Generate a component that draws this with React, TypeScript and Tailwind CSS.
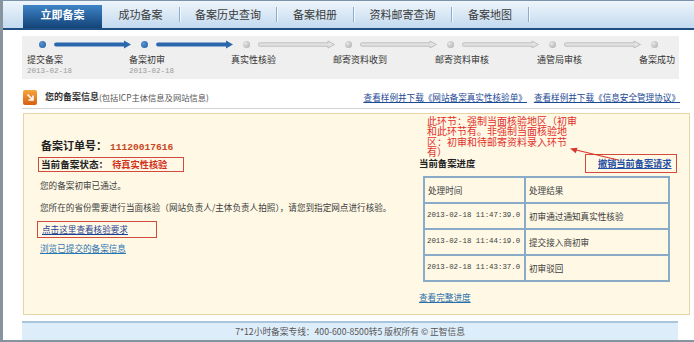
import React from "react";

const cjk = "font-['Noto_Sans_CJK_SC','Noto_Sans',sans-serif]";
const mono = "font-['Liberation_Mono',monospace]";

const tabs = [
  { name: "成功备案", w: "w-[78px]" },
  { name: "备案历史查询", w: "w-[97px]" },
  { name: "备案相册", w: "w-[77px]" },
  { name: "资料邮寄查询", w: "w-[98px]" },
  { name: "备案地图", w: "w-[77px]" },
];

const steps = [
  { label: "提交备案", date: "2013-02-18", done: true },
  { label: "备案初审", date: "2013-02-18", done: true },
  { label: "真实性核验", date: "", done: false },
  { label: "邮寄资料收到", date: "", done: false },
  { label: "邮寄资料审核", date: "", done: false },
  { label: "通管局审核", date: "", done: false },
  { label: "备案成功", date: "", done: false },
];

const records = [
  { time: "2013-02-18 11:47:39.0", result: "初审通过通知真实性核验" },
  { time: "2013-02-18 11:44:19.0", result: "提交接入商初审" },
  { time: "2013-02-18 11:43:37.0", result: "初审驳回" },
];

const Arrow = ({ done }: { done: boolean }) => (
  <svg width="78" height="9" viewBox="0 0 78 9" className="ml-[8px] shrink-0">
    {done ? (
      <path d="M2 2.6 H70 V0.6 L77 4.5 L70 8.4 V6.4 H2 A1.9 1.9 0 0 1 2 2.6 Z" fill="#2b67ad" />
    ) : (
      <path
        d="M2 2.8 H70 V1 L76.5 4.5 L70 8 V6.2 H2 A1.7 1.7 0 0 1 2 2.8 Z"
        fill="#e2e2e2"
        stroke="#b4b4b4"
        strokeWidth="0.8"
      />
    )}
  </svg>
);

const StepBar = () => (
  <div className="ml-[19px] mt-[6px] w-[657px] h-[43px] bg-[#efefef] pl-[5px] pt-[4px] flex">
    {steps.map((s, i) => (
      <div key={s.label} className="w-[102px] shrink-0 flex flex-col">
        <div className="flex items-center h-[9px]">
          <span
            className={`ml-[12px] w-[7px] h-[7px] rounded-full shrink-0 ${
              s.done
                ? "bg-[radial-gradient(circle_at_35%_35%,#5c93d1,#1f5ca3)]"
                : "bg-[radial-gradient(circle_at_35%_35%,#e6e6e6,#a8a8a8)]"
            }`}
          ></span>
          {i < steps.length - 1 && <Arrow done={s.done} />}
        </div>
        <div className="mt-[5px] text-[9px] leading-[11px] text-[#333] whitespace-nowrap">{s.label}</div>
        <div className={`${mono} mt-[2px] text-[7.5px] leading-[9px] text-[#9a9a9a]`}>{s.date}</div>
      </div>
    ))}
  </div>
);

export default function App() {
  return (
    <div
      className={`${cjk} relative w-[694px] h-[342px] bg-white border-l-[3px] border-b-2 border-[#8694a0] overflow-hidden`}
    >
      {/* Tabs */}
      <div className="h-[30px] border-t border-[#7b93aa] border-b-2 border-b-[#1f4f82] bg-gradient-to-b from-[#eef5fb] to-[#c3daef] flex items-end pl-[20px]">
        <div className="w-[79px] h-[23px] bg-gradient-to-b from-[#3f84c7] to-[#134479] text-white font-bold text-[11px] flex items-center justify-center pb-[4px]">
          立即备案
        </div>
        {tabs.map((t) => (
          <div key={t.name} className={`${t.w} h-full flex items-center`}>
            <span className="flex-1 text-center text-[11px] text-[#3a3a3a]">{t.name}</span>
            <span className="w-px h-[15px] bg-[#8eaccb] shadow-[1px_0_0_#f4f8fc]"></span>
          </div>
        ))}
      </div>

      <StepBar />

      {/* Section header */}
      <div className="ml-[19px] mt-[7px] w-[658px] h-[23px] border-b border-[#d3d3d3] flex items-center">
        <span className="ml-[1px] w-[14px] h-[15px] rounded-[2px] bg-gradient-to-b from-[#f6a53c] to-[#d75f10] flex items-center justify-center">
          <svg width="9" height="9" viewBox="0 0 9 9">
            <path d="M1.5 1.5 L6.5 6.5 M7 2.5 V7 H2.5" stroke="#fff" strokeWidth="1.6" fill="none" />
          </svg>
        </span>
        <span className="ml-[8px] text-[9px] font-bold text-[#333]">您的备案信息</span>
        <span className="text-[8.3px] text-[#555]">(包括ICP主体信息及网站信息)</span>
        <div className="ml-auto flex gap-[7px] text-[8.6px] text-[#1d4a94] underline">
          <a>查看样例并下载《网站备案真实性核验单》</a>
          <a>查看样例并下载《信息安全管理协议》</a>
        </div>
      </div>

      {/* Main box */}
      <div className="relative ml-[20px] mt-[4px] w-[667px] h-[202px] border border-[#e9d4aa] bg-[#fef8e5] flex">
        <div className="w-[395px] pl-[16px] pt-[23px] text-[8.6px] text-[#3c3c3c]">
          <div className="flex items-baseline h-[14px] pl-[1px]">
            <span className="text-[11px] font-bold text-[#222]">备案订单号：</span>
            <span className={`${mono} ml-[3px] text-[9.6px] font-bold text-[#c8461e]`}>11120017616</span>
          </div>
          <div className="mt-[6px] -ml-[2px] w-[146px] h-[15px] border border-[#d24a3c] flex items-center pl-[2px]">
            <span className="text-[9.6px] font-bold text-[#222]">当前备案状态：</span>
            <span className="ml-[4px] text-[9.2px] font-bold text-[#d3301c]">待真实性核验</span>
          </div>
          <p className="mt-[7px] leading-[12px]">您的备案初审已通过。</p>
          <p className="mt-[10px] leading-[12px] whitespace-nowrap">
            您所在的省份需要进行当面核验（网站负责人/主体负责人拍照），请您到指定网点进行核验。
          </p>
          <div className="mt-[8px] -ml-[3px] w-[120px] h-[17px] border border-[#d24a3c] flex items-center pl-[4px]">
            <a className="text-[#1f3f94] underline">点击这里查看核验要求</a>
          </div>
          <a className="block mt-[4px] leading-[12px] text-[#2a76b2] underline">浏览已提交的备案信息</a>
        </div>

        <div className="w-[258px] pt-[40px]">
          <div className="flex items-center h-[19px]">
            <span className="text-[9.4px] font-bold text-[#222]">当前备案进度</span>
            <div className="ml-auto w-[92px] h-[19px] border border-[#d24a3c] flex items-center pl-[12px]">
              <a className="text-[9.2px] font-bold text-[#1f4fa6] underline">撤销当前备案请求</a>
            </div>
          </div>
          <table className="ml-[4px] mt-[3px] w-[247px] border-collapse text-[8.6px] text-[#3c3c3c]">
            <tbody>
              <tr className="h-[26px]">
                <td className="w-[101px] border-2 border-[#8aabc7] pl-[3px]">处理时间</td>
                <td className="border-2 border-[#8aabc7] pl-[3px]">处理结果</td>
              </tr>
              {records.map((r) => (
                <tr key={r.time} className="h-[26px]">
                  <td className={`${mono} border-2 border-[#8aabc7] pl-[2px] text-[7.4px] whitespace-nowrap`}>{r.time}</td>
                  <td className="border-2 border-[#8aabc7] pl-[3px]">{r.result}</td>
                </tr>
              ))}
            </tbody>
          </table>
          <a className="block mt-[9px] text-[8.6px] leading-[12px] text-[#2a6ea9] underline">查看完整进度</a>
        </div>

        {/* Red annotation */}
        <div className="absolute left-[403px] top-[2px] text-[10px] leading-[10.4px] text-[#e3302b] whitespace-nowrap">
          <div>此环节：强制当面核验地区（初审</div>
          <div>和此环节有。非强制当面核验地</div>
          <div>区：初审和待邮寄资料录入环节</div>
          <div>有）</div>
        </div>
        <svg className="absolute left-[540px] top-[30px]" width="60" height="20" viewBox="0 0 60 20">
          <path d="M8 5 L54 16" stroke="#d8352c" strokeWidth="1.2" />
          <path d="M6 4.5 L13.5 3.8 L11.8 9.2 Z" fill="#d8352c" />
        </svg>
      </div>

      {/* Footer */}
      <div className="ml-[19px] mt-[6px] w-[656px] h-[19px] border-t-2 border-[#a9c5de] bg-[#deedfa] flex items-center justify-center text-[8.7px] text-[#555]">
        7*12小时备案专线：400-600-8500转5 版权所有 © 正智信息
      </div>
    </div>
  );
}
